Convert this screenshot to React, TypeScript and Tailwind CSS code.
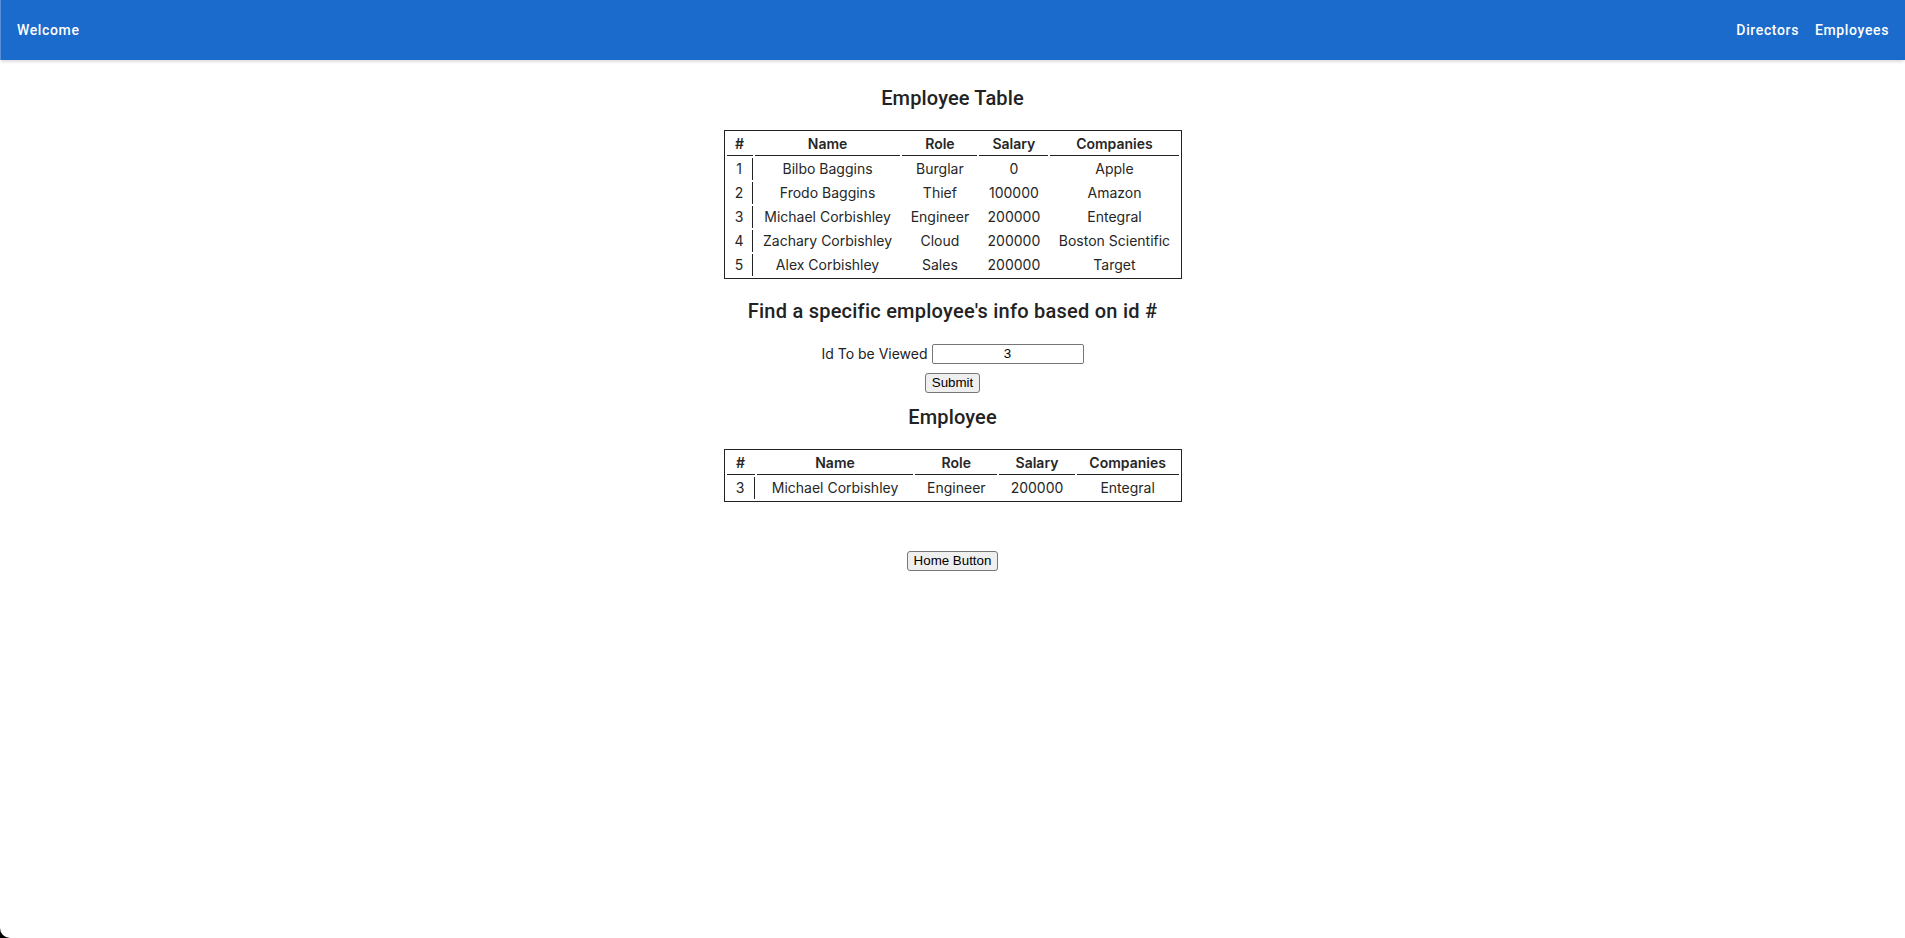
import React from "react";

const employees = [
  { id: 1, name: "Bilbo Baggins", role: "Burglar", salary: "0", company: "Apple" },
  { id: 2, name: "Frodo Baggins", role: "Thief", salary: "100000", company: "Amazon" },
  { id: 3, name: "Michael Corbishley", role: "Engineer", salary: "200000", company: "Entegral" },
  { id: 4, name: "Zachary Corbishley", role: "Cloud", salary: "200000", company: "Boston Scientific" },
  { id: 5, name: "Alex Corbishley", role: "Sales", salary: "200000", company: "Target" },
];

const sysFont = { fontFamily: "Inter, 'Noto Sans', sans-serif" };
const ctrlFont = { fontFamily: "'Liberation Sans', Arial, sans-serif" };

function EmpTable({ rows }: { rows: typeof employees }) {
  const th = "border-b border-[#222] px-2 py-[1px] font-semibold leading-5";
  const td = "px-2 py-[1px] leading-5";
  return (
    <table
      className="w-[458px] border border-[#222] text-center text-[14px] text-[#262626]"
      style={{ ...sysFont, borderCollapse: "separate", borderSpacing: "2px" }}
    >
      <thead>
        <tr>
          <th className={th}>#</th>
          <th className={th}>Name</th>
          <th className={th}>Role</th>
          <th className={th}>Salary</th>
          <th className={th}>Companies</th>
        </tr>
      </thead>
      <tbody>
        {rows.map((r) => (
          <tr key={r.id}>
            <td className={td + " border-r border-[#222]"}>{r.id}</td>
            <td className={td}>{r.name}</td>
            <td className={td}>{r.role}</td>
            <td className={td}>{r.salary}</td>
            <td className={td}>{r.company}</td>
          </tr>
        ))}
      </tbody>
    </table>
  );
}

export default function App() {
  return (
    <div
      className="relative min-h-[938px] bg-white text-[#222]"
      style={{ fontFamily: "Roboto, 'Noto Sans', sans-serif" }}
    >
      <header className="flex h-[60px] items-center justify-between border-l border-[#5a8fd6] bg-[#1a6bcb] px-4 text-[14px] font-medium tracking-[0.045em] text-white shadow-[0_2px_4px_-1px_rgba(0,0,0,0.2)]">
        <span>Welcome</span>
        <nav className="flex gap-4">
          <span>Directors</span>
          <span>Employees</span>
        </nav>
      </header>

      <main className="flex flex-col items-center">
        <h2 className="mt-[22px] text-[20px] font-medium leading-8 tracking-[0.0075em]">Employee Table</h2>
        <div className="mt-[16px]">
          <EmpTable rows={employees} />
        </div>

        <h2 className="mt-[16px] text-[20px] font-medium leading-8 tracking-[0.012em]">
          Find a specific employee's info based on id #
        </h2>
        <div className="mt-[16px] flex items-center gap-[4px] text-[14px]" style={sysFont}>
          <span>Id To be Viewed</span>
          <input
            readOnly
            value="3"
            className="h-[20px] w-[152px] rounded-[2px] border border-[#767676] px-[2px] text-center text-[13.33px] text-black"
            style={ctrlFont}
          />
        </div>
        <button
          className="mt-[9px] h-[20px] rounded-[3px] border border-[#767676] bg-[#efefef] px-[6px] text-[13.33px] leading-none text-black"
          style={ctrlFont}
        >
          Submit
        </button>

        <h2 className="mt-[8px] text-[20px] font-medium leading-8 tracking-[0.0075em]">Employee</h2>
        <div className="mt-[16px]">
          <EmpTable rows={[employees[2]]} />
        </div>

        <button
          className="mt-[49px] h-[20px] rounded-[3px] border border-[#767676] bg-[#efefef] px-[6px] text-[13.33px] leading-none text-black"
          style={ctrlFont}
        >
          Home Button
        </button>
      </main>

      <div className="absolute bottom-0 left-0 h-[10px] w-[10px] bg-black">
        <div className="h-full w-full rounded-bl-[10px] bg-white" />
      </div>
    </div>
  );
}
